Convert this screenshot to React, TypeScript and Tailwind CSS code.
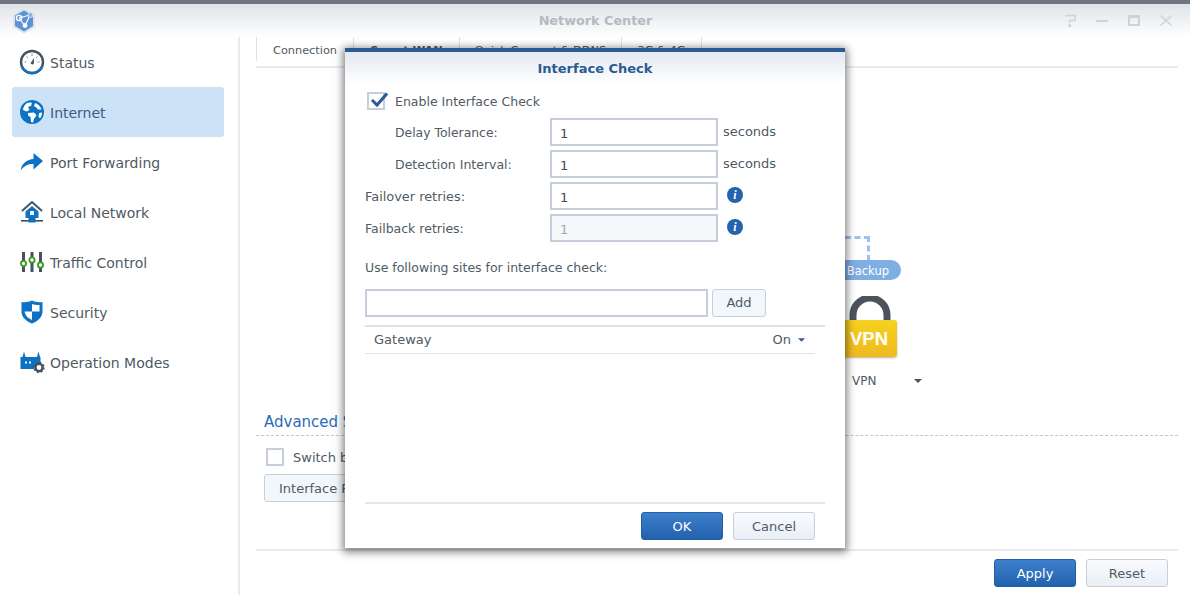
import type { ReactNode } from "react";

function AppLogo() {
  return (
    <svg width="26" height="26" viewBox="0 0 26 26">
      <path d="M13 0.5 L24 6.5 V19 L13 25.5 L2 19 V6.5 Z" fill="#dfe3e8" />
      <path d="M13 2.5 L22 7.5 V18 L13 23.5 L4 18 V7.5 Z" fill="#5b94d6" />
      <path d="M8 10 L19 7 M8 10 L14 18 M19 7 L14 18" stroke="#fff" strokeWidth="1.2" fill="none" />
      <circle cx="8" cy="10" r="2.6" fill="none" stroke="#fff" strokeWidth="1.4" />
      <circle cx="14" cy="17.5" r="2.4" fill="#fff" />
      <circle cx="19.5" cy="7" r="2.4" fill="#7fb0e6" stroke="#dfe3e8" />
    </svg>
  );
}

function GaugeIcon() {
  return (
    <svg width="26" height="26" viewBox="0 0 26 26">
      <circle cx="13" cy="13" r="11" fill="#fff" stroke="#48525c" strokeWidth="2.4" />
      <path d="M2.6 17 A11 11 0 0 0 23.4 17" fill="none" stroke="#0d72c4" strokeWidth="2.4" />
      <path d="M13 4.5 V7 M5.5 13 H7.5 M18.5 13 H20.5 M7.5 7.5 L9 9 M18.5 7.5 L17 9" stroke="#8a939c" strokeWidth="1" />
      <path d="M15 9 L14.8 15 A2 2 0 0 1 11.6 14 Z" fill="#48525c" />
    </svg>
  );
}

function GlobeIcon() {
  return (
    <svg width="26" height="26" viewBox="0 0 26 26">
      <circle cx="13" cy="13" r="12" fill="#0d72c4" />
      <path d="M6 6 C8 3.5 11 3 13 4 L12 7 L9 8 L10.5 11 L7.5 12.5 L4 11 C4 9 5 7 6 6 Z" fill="#fff" />
      <path d="M16 4 C19 5 21.5 7.5 22.5 10.5 L19 10.5 L17 8 L15 7.5 Z" fill="#fff" />
      <path d="M9 14 L15 13.5 L17.5 16 L15 20 L14 23.5 L12 23 L11.5 18 L9 16.5 Z" fill="#fff" />
      <path d="M20 14 L23 13.5 C23 16 22 18 21 19.5 L19.5 17.5 Z" fill="#fff" />
    </svg>
  );
}

function ForwardIcon() {
  return (
    <svg width="24" height="20" viewBox="0 0 24 20">
      <path d="M0.5 18.5 C2 11 7 7.5 13.5 7 V1 L23 9 L13.5 17.5 V12 C8 11.5 4 14 0.5 18.5 Z" fill="#0d72c4" />
    </svg>
  );
}

function HomeNetIcon() {
  return (
    <svg width="24" height="24" viewBox="0 0 24 24">
      <path d="M2 11 L12 2 L22 11" fill="none" stroke="#48525c" strokeWidth="2" />
      <path d="M5.5 11.5 L12 6 L18.5 11.5 V18 H5.5 Z" fill="#0d72c4" />
      <rect x="10" y="11" width="4" height="4" fill="#fff" />
      <rect x="1" y="20" width="22" height="1.6" fill="#48525c" />
      <rect x="8.5" y="18" width="7" height="4.5" fill="#0d72c4" />
    </svg>
  );
}

function SlidersIcon() {
  return (
    <svg width="24" height="22" viewBox="0 0 24 22">
      <path d="M3.5 1 V21 M12 1 V21 M20.5 1 V21" stroke="#48525c" strokeWidth="3" />
      <circle cx="3.5" cy="12.5" r="2.6" fill="#fff" stroke="#3a9a1c" strokeWidth="1.8" />
      <circle cx="12" cy="9" r="2.6" fill="#fff" stroke="#3a9a1c" strokeWidth="1.8" />
      <circle cx="20.5" cy="14" r="2.6" fill="#fff" stroke="#3a9a1c" strokeWidth="1.8" />
    </svg>
  );
}

function ShieldIcon() {
  return (
    <svg width="24" height="24" viewBox="0 0 24 24">
      <path d="M1.5 2 C5 2.5 9 2 12 0.5 C15 2 19 2.5 22.5 2 V12 C22.5 17.5 17 21.5 12 23.5 C7 21.5 1.5 17.5 1.5 12 Z" fill="#0d72c4" />
      <path d="M12 4 C14.5 5 17 5.3 19.5 5 V11.5 H12 Z M12 11.5 V20 C8.5 18.5 5 15.5 4.6 11.5 Z" fill="#fff" />
    </svg>
  );
}

function RouterGearIcon() {
  return (
    <svg width="25" height="22" viewBox="0 0 25 22">
      <path d="M4 0.5 L5.5 6 H17 L18.5 0.5 L20 6 H20.5 V12 A6.5 6.5 0 0 0 14 18 H0.5 V6 H2.5 Z" fill="#0d72c4" />
      <rect x="5" y="10.5" width="2" height="2" fill="#fff" />
      <rect x="9" y="10.5" width="2" height="2" fill="#fff" />
      <circle cx="19" cy="16.5" r="3.6" fill="none" stroke="#48525c" strokeWidth="2.4" />
      <circle cx="19" cy="16.5" r="5" fill="none" stroke="#48525c" strokeWidth="1.4" strokeDasharray="2 1.9" />
    </svg>
  );
}

function InfoIcon() {
  return (
    <span className="w-4 h-4 rounded-full bg-[#2464ae] flex items-center justify-center text-white text-[12px] font-bold italic [font-family:'Liberation_Serif',serif]">
      i
    </span>
  );
}

function Caret({ color = "#3c5a82", w = 8 }: { color?: string; w?: number }) {
  return (
    <svg width={w} height="4" viewBox="0 0 8 4">
      <path d="M0 0 H8 L4 4 Z" fill={color} />
    </svg>
  );
}

const menu: { label: string; icon: ReactNode; active?: boolean }[] = [
  { label: "Status", icon: <GaugeIcon /> },
  { label: "Internet", icon: <GlobeIcon />, active: true },
  { label: "Port Forwarding", icon: <ForwardIcon /> },
  { label: "Local Network", icon: <HomeNetIcon /> },
  { label: "Traffic Control", icon: <SlidersIcon /> },
  { label: "Security", icon: <ShieldIcon /> },
  { label: "Operation Modes", icon: <RouterGearIcon /> },
];

const btnBlue =
  "w-[82px] h-[28px] pt-[1px] rounded-[3px] border border-[#1f5fa8] bg-gradient-to-b from-[#3d80cc] to-[#2361ae] text-white text-[13px]";
const btnGray =
  "w-[82px] h-[28px] pt-[1px] rounded-[3px] border border-[#c6d0dc] bg-gradient-to-b from-[#f9fbfd] to-[#e9eff5] text-[#505a64] text-[13px]";

function FieldRow({
  label,
  indent,
  disabled,
  size,
  children,
}: {
  label: string;
  indent?: boolean;
  disabled?: boolean;
  size: string;
  children?: ReactNode;
}) {
  return (
    <div className="flex items-center h-[28px] mb-[4px]">
      <div className={`w-[185px] pt-[2px] ${size} ${indent ? "pl-[30px]" : ""}`}>{label}</div>
      <input
        readOnly
        value="1"
        className={`w-[168px] h-[28px] border-2 border-[#c6cedb] px-[8px] pt-[2px] outline-none ${
          disabled ? "bg-[#f5f7fa] text-[#a0a8b0]" : "bg-white text-[#414b55]"
        }`}
      />
      {children}
    </div>
  );
}

export default function App() {
  return (
    <div className="relative w-[1190px] h-[595px] overflow-hidden bg-white flex flex-col text-[13px] text-[#505a64] [font-family:'DejaVu_Sans',sans-serif]">
      {/* title bar */}
      <div className="h-[37px] shrink-0 border-t-4 border-[#6f7680] bg-gradient-to-b from-[#dfe3e8] to-white flex items-center pl-[11px] pr-[12px]">
        <AppLogo />
        <div className="flex-1 text-center font-bold text-[12.8px] text-[#b4bac2] pr-[24px]">Network Center</div>
        <div className="absolute right-[18px] top-[14px] flex items-center gap-[20px]">
          <svg width="12" height="13" viewBox="0 0 12 13">
            <path d="M1 1.5 H11 V6.5 H5.5 V9 M5 11 H6.5 V13 H5 Z" fill="none" stroke="#cfd3d8" strokeWidth="1.6" />
          </svg>
          <div className="w-[12px] h-[2px] bg-[#cfd3d8]" />
          <div className="w-[12px] h-[11px] border-2 border-t-[3px] border-[#cfd3d8]" />
          <svg width="12" height="11" viewBox="0 0 12 11">
            <path d="M0.5 0.5 L11.5 10.5 M11.5 0.5 L0.5 10.5" stroke="#cfd3d8" strokeWidth="1.5" />
          </svg>
        </div>
      </div>

      <div className="flex flex-1 min-h-0">
        {/* sidebar */}
        <div className="w-[240px] shrink-0 border-r-2 border-[#e8eaed] pl-[12px] pr-[14px]">
          {menu.map((m) => (
            <div
              key={m.label}
              className={`h-[50px] flex items-center rounded-[3px] text-[14px] ${m.active ? "bg-[#cce2f6]" : ""}`}
            >
              <div className="w-[38px] flex justify-center pl-[2px]">{m.icon}</div>
              <span className={`pt-[2px] ${m.active ? "text-[#3e5c86]" : ""}`}>{m.label}</span>
            </div>
          ))}
        </div>

        {/* page behind the dialog */}
        <div className="relative flex-1 flex flex-col pl-[16px] pr-[12px]">
          <div className="h-[31px] shrink-0 border-b-2 border-[#e8eaed] flex text-[11.3px] leading-[27px]">
            <div className="w-[97px] border-l border-[#dde2e8] text-center h-[24px]">Connection</div>
            <div className="w-[106px] border-l border-[#dde2e8] text-center h-[24px] font-bold">Smart WAN</div>
            <div className="w-[162px] border-l border-[#dde2e8] text-center h-[24px]">Quick Connect & DDNS</div>
            <div className="w-[81px] border-l border-r border-[#dde2e8] text-center h-[24px]">3G & 4G</div>
          </div>

          {/* WAN diagram */}
          <div className="relative h-[343px] shrink-0">
            <div className="absolute left-[589px] top-[168px] w-[25px] h-[25px] border-t-[3px] border-r-[3px] border-dashed border-[#9cc3ef]" />
            <div className="absolute left-[560px] top-[192px] w-[85px] h-[20px] rounded-full bg-[#7faee3] text-white text-[11.5px] leading-[22px] text-right pr-[12px]">
              Backup
            </div>
            <div className="absolute left-[580px] top-[228px]">
              <svg width="68" height="66" viewBox="0 0 68 66">
                <path d="M17 30 V19 A17 17 0 0 1 51 19 V30" fill="none" stroke="#4c535c" strokeWidth="7" />
              </svg>
            </div>
            <div className="absolute left-[560px] top-[252px] w-[81px] h-[37px] rounded-[3px] bg-gradient-to-b from-[#f5d221] to-[#f1b91f] shadow-[0_1px_2px_rgba(0,0,0,0.3)] text-white font-bold text-[18.5px] leading-[38px] text-right pr-[9px] [font-family:'Liberation_Sans',sans-serif]">
              VPN
            </div>
            <div className="absolute left-[596px] top-[304px] text-[12px] leading-[18px]">VPN</div>
            <div className="absolute left-[658px] top-[311px]">
              <Caret color="#4c535c" />
            </div>
          </div>

          {/* advanced settings */}
          <div className="h-[25px] shrink-0 border-b border-dashed border-[#c6c6c6] pl-[8px] text-[15px] leading-[22px] text-[#2a6cb8]">
            Advanced Settings
          </div>
          <div className="flex items-center mt-[12px] pl-[10px] h-[18px]">
            <div className="w-[18px] h-[18px] border-2 border-[#c6cedb]" />
            <span className="ml-[9px] pt-[2px]">Switch between</span>
          </div>
          <div className="mt-[8px] pl-[8px]">
            <button className="h-[28px] w-[160px] pt-[1px] rounded-[3px] border border-[#c6d0dc] bg-[#f2f7fb] text-left pl-[14px]">
              Interface Priority
            </button>
          </div>

          {/* footer */}
          <div className="mt-[47px] border-t-2 border-[#e8eaed] flex justify-end gap-[10px] pt-[8px] pr-[10px]">
            <button className={btnBlue}>Apply</button>
            <button className={btnGray}>Reset</button>
          </div>
        </div>
      </div>

      {/* Interface Check dialog */}
      <div className="absolute left-[345px] top-[48px] w-[500px] h-[500px] bg-white border-t-4 border-[#2a5b92] shadow-[0_2px_8px_2px_rgba(0,0,0,0.5)] flex flex-col">
        <div className="h-[32px] shrink-0 bg-gradient-to-b from-[#e3e9f1] to-white text-center font-bold text-[#2a5b92] leading-[33px]">
          Interface Check
        </div>
        <div className="flex-1 flex flex-col px-[20px] pt-[8px] pb-[8px]">
          <div className="flex items-center h-[18px] mb-[8px] pl-[2px]">
            <div className="relative w-[18px] h-[18px] border-2 border-[#c6cedb]">
              <svg className="absolute left-[1px] -top-[3px]" width="18" height="18" viewBox="0 0 18 18">
                <path d="M2 9 L7 14 L17 2.5" fill="none" stroke="#2a5b92" strokeWidth="3" />
              </svg>
            </div>
            <span className="ml-[10px] pt-[2px] text-[12.5px]">Enable Interface Check</span>
          </div>

          <FieldRow label="Delay Tolerance:" indent size="text-[12.4px]">
            <span className="ml-[5px] -mt-[1px]">seconds</span>
          </FieldRow>
          <FieldRow label="Detection Interval:" indent size="text-[12.5px]">
            <span className="ml-[5px] -mt-[1px]">seconds</span>
          </FieldRow>
          <FieldRow label="Failover retries:" size="text-[12.9px]">
            <span className="ml-[9px] -mt-[3px]">
              <InfoIcon />
            </span>
          </FieldRow>
          <FieldRow label="Failback retries:" size="text-[12.5px]" disabled>
            <span className="ml-[9px] -mt-[3px]">
              <InfoIcon />
            </span>
          </FieldRow>

          <div className="mt-[13px] h-[18px] leading-[18px] text-[12.5px]">Use following sites for interface check:</div>

          <div className="flex gap-[4px] mt-[12px]">
            <input readOnly className="w-[343px] h-[28px] border-2 border-[#c6cedb] outline-none" />
            <button className="w-[54px] h-[28px] rounded-[3px] border border-[#c6d0dc] bg-[#f2f7fb]">Add</button>
          </div>

          <div className="mt-[8px] border-t-2 border-[#dde2e8]">
            <div className="w-[450px] h-[27px] border-b border-[#e0e3e7] flex items-center justify-between pl-[9px] pr-[10px]">
              <span>Gateway</span>
              <span className="flex items-center gap-[7px]">
                On
                <Caret w={7} />
              </span>
            </div>
          </div>

          <div className="mt-auto border-t-2 border-[#e4e6e9] flex justify-end gap-[10px] pt-[8px] pr-[10px]">
            <button className={btnBlue}>OK</button>
            <button className={btnGray}>Cancel</button>
          </div>
        </div>
      </div>
    </div>
  );
}
